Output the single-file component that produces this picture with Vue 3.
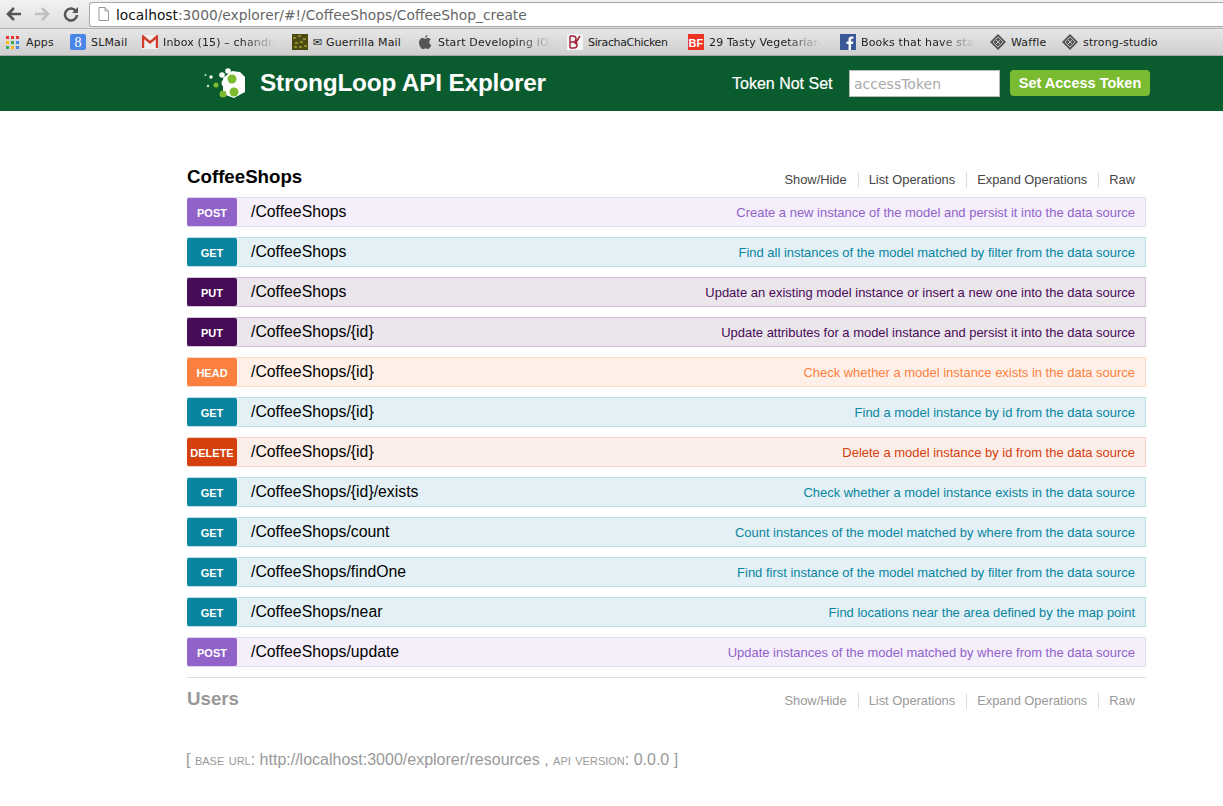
<script setup>
const bookmarks = [
  { id: 'apps', label: 'Apps', w: 65 },
  { id: 'g', label: 'SLMail', w: 72 },
  { id: 'm', label: 'Inbox (15) – chandrika', w: 150, fade: true, tw: 113 },
  { id: 'guerrilla', label: '✉ Guerrilla Mail', w: 125 },
  { id: 'apple', label: 'Start Developing iOS Apps', w: 150, fade: true, tw: 114 },
  { id: 'sir', label: 'SirachaChicken', w: 121, ls: -0.35 },
  { id: 'bf', label: '29 Tasty Vegetarian Recipes', w: 152, fade: true, tw: 112 },
  { id: 'f', label: 'Books that have stayed', w: 150, fade: true, tw: 114 },
  { id: 'w', label: 'Waffle', w: 72 },
  { id: 'w', label: 'strong-studio', w: 100 },
]
const rows = [
  ['post', 'POST', '/CoffeeShops', 'Create a new instance of the model and persist it into the data source'],
  ['get', 'GET', '/CoffeeShops', 'Find all instances of the model matched by filter from the data source'],
  ['put', 'PUT', '/CoffeeShops', 'Update an existing model instance or insert a new one into the data source'],
  ['put', 'PUT', '/CoffeeShops/{id}', 'Update attributes for a model instance and persist it into the data source'],
  ['head', 'HEAD', '/CoffeeShops/{id}', 'Check whether a model instance exists in the data source'],
  ['get', 'GET', '/CoffeeShops/{id}', 'Find a model instance by id from the data source'],
  ['delete', 'DELETE', '/CoffeeShops/{id}', 'Delete a model instance by id from the data source'],
  ['get', 'GET', '/CoffeeShops/{id}/exists', 'Check whether a model instance exists in the data source'],
  ['get', 'GET', '/CoffeeShops/count', 'Count instances of the model matched by where from the data source'],
  ['get', 'GET', '/CoffeeShops/findOne', 'Find first instance of the model matched by filter from the data source'],
  ['get', 'GET', '/CoffeeShops/near', 'Find locations near the area defined by the map point'],
  ['post', 'POST', '/CoffeeShops/update', 'Update instances of the model matched by where from the data source'],
]
const links = ['Show/Hide', 'List Operations', 'Expand Operations', 'Raw']
const appDots = ['#e33', '#e33', '#e33', '#fb0', '#3a5', '#48e', '#3a5', '#fb0', '#48e']
function textStyle(b) {
  const s = {}
  if (b.tw) s.width = b.tw + 'px'
  if (b.ls) s.letterSpacing = b.ls + 'px'
  return s
}
</script>

<template>
  <div class="page">
    <div class="toolbar">
      <svg class="nav" width="16" height="16" viewBox="0 0 16 16"><path d="M8 2 2 8l6 6M2.500 8H15" fill="none" stroke="#555" stroke-width="2.600"/></svg>
      <svg class="nav fwd" width="16" height="16" viewBox="0 0 16 16"><path d="M8 2l6 6-6 6M13.500 8H1" fill="none" stroke="#c0c0c0" stroke-width="2.600"/></svg>
      <svg class="nav reload" width="16" height="16" viewBox="0 0 16 16"><path d="M13 5.200A6 6 0 1 0 14 9" fill="none" stroke="#555" stroke-width="2.500"/><path d="M15 1v6H9z" fill="#555"/></svg>
      <div class="omni">
        <svg width="11" height="14" viewBox="0 0 11 14"><path d="M1 .5h6l3.500 3.500v9.500H1zM7 .5V4h3.500" fill="#fff" stroke="#999"/></svg>
        <span class="url"><b>localhost</b>:3000/explorer/#!/CoffeeShops/CoffeeShop_create</span>
      </div>
    </div>

    <div class="bookmarks">
      <div v-for="b in bookmarks" :key="b.label" class="bm" :style="{ width: b.w + 'px' }">
        <span class="bm-icon">
          <span v-if="b.id === 'apps'" class="apps"><i v-for="(c, i) in appDots" :key="i" :style="{ background: c }"></i></span>
          <svg v-else-if="b.id === 'g'" width="16" height="16" viewBox="0 0 16 16"><rect width="16" height="16" rx="2" fill="#4a86e8"/><text x="8" y="13" text-anchor="middle" font-size="14" font-family="Liberation Serif" fill="#fff">8</text></svg>
          <svg v-else-if="b.id === 'm'" width="16" height="14" viewBox="0 0 16 14"><rect width="16" height="14" fill="#eee"/><path d="M1 13V1.500l7 6 7-6V13" fill="none" stroke="#d33b2c" stroke-width="2.400"/></svg>
          <svg v-else-if="b.id === 'guerrilla'" width="16" height="16" viewBox="0 0 16 16"><rect width="16" height="16" fill="#4d4a12"/><path d="M1 3h3v2H1zM6 1h3v2H6zM11 4h3v2h-3zM3 8h3v2H3zM8 7h3v2H8zM12 11h3v2h-3zM2 12h3v2H2zM7 12h3v2H7z" fill="#8b8a2a"/></svg>
          <svg v-else-if="b.id === 'apple'" width="14" height="16" viewBox="0 0 14 16"><path d="M9.500 1C9.500 2.600 8.300 3.800 7 3.800 7 2.300 8.200 1.200 9.500 1zM7 4.800c.8 0 1.700-.8 3-.8 1.100 0 2.200.6 2.800 1.500-2.300 1.400-1.900 4.600.6 5.600-.7 1.800-2 3.900-3.300 3.900-.9 0-1.400-.6-2.500-.6s-1.700.6-2.600.6C3.300 15 1 11.800 1 8.700 1 5.800 2.800 4 4.700 4c1 0 1.700.8 2.300.8z" fill="#555"/></svg>
          <svg v-else-if="b.id === 'sir'" width="16" height="16" viewBox="0 0 16 16"><rect width="16" height="16" fill="#f4f4f4"/><path d="M3 2v12M3 2h3q3 0 3 3t-3 3H3M3 8h4q3 0 3 3t-3 3H3M13 2 8 10" fill="none" stroke="#a2263c" stroke-width="1.500"/></svg>
          <svg v-else-if="b.id === 'bf'" width="16" height="16" viewBox="0 0 16 16"><rect width="16" height="16" fill="#ee3322"/><text x="8" y="12.500" text-anchor="middle" font-size="11" font-weight="700" font-family="Liberation Sans" fill="#fff">BF</text></svg>
          <svg v-else-if="b.id === 'f'" width="16" height="16" viewBox="0 0 16 16"><rect width="16" height="16" fill="#3b5998"/><path d="M11 16V10h2l.3-2.500H11V6c0-.8.300-1.200 1.200-1.200h1.200V2.500C13 2.400 12.300 2.400 11.600 2.400 9.700 2.400 8.500 3.500 8.500 5.600v1.900h-2V10h2v6z" fill="#fff"/></svg>
          <svg v-else width="16" height="16" viewBox="0 0 16 16"><path d="M8 0l8 8-8 8-8-8z" fill="#555"/><path d="M8 3 13 8 8 13 3 8zM5.500 5.500l5 5M10.500 5.500l-5 5" fill="none" stroke="#ccc" stroke-width=".9"/></svg>
        </span>
        <span class="bm-text" :class="{ fade: b.fade }" :style="textStyle(b)">{{ b.label }}</span>
      </div>
    </div>

    <header class="top">
      <div class="brand">
        <svg class="logo" width="42" height="32" viewBox="0 0 42 32">
          <path d="M28 3l8 1 5 5v15l-11 6-11-4V10z" fill="#fff"/>
          <circle cx="28" cy="11" r="4.500" fill="#7dbb2f"/>
          <circle cx="30" cy="24" r="4.500" fill="#7dbb2f"/>
          <circle cx="19" cy="26" r="3.500" fill="#7dbb2f"/>
          <circle cx="18" cy="7" r="2.800" fill="#fff"/>
          <circle cx="24" cy="3" r="2.800" fill="#fff"/>
          <circle cx="21" cy="15" r="3.500" fill="#fff"/>
          <circle cx="12" cy="17" r="2.500" fill="#7dbb2f"/>
          <circle cx="7" cy="9" r="1.700" fill="#fff"/>
          <circle cx="1.500" cy="7" r="1" fill="#cfe3c0"/>
          <circle cx="4" cy="18" r="1.200" fill="#cfe3c0"/>
        </svg>
        <span class="title">StrongLoop API Explorer</span>
      </div>
      <div class="token">
        <span class="token-label">Token Not Set</span>
        <input class="token-input" placeholder="accessToken" />
        <button class="token-btn">Set Access Token</button>
      </div>
    </header>

    <main class="content">
      <section class="resource">
        <div class="res-head">
          <h2>CoffeeShops</h2>
          <ul class="links"><li v-for="l in links" :key="l">{{ l }}</li></ul>
        </div>
        <div class="ops">
          <div v-for="r in rows" :key="r[0] + r[2] + r[3]" class="op" :class="r[0]">
            <span class="method">{{ r[1] }}</span>
            <span class="path">{{ r[2] }}</span>
            <span class="desc">{{ r[3] }}</span>
          </div>
        </div>
      </section>
      <section class="resource users">
        <div class="res-head">
          <h2>Users</h2>
          <ul class="links"><li v-for="l in links" :key="l">{{ l }}</li></ul>
        </div>
      </section>
      <p class="base">[ <span class="sc">base url</span>: http://localhost:3000/explorer/resources , <span class="sc">api version</span>: 0.0.0 ]</p>
    </main>
  </div>
</template>

<style>
html, body { margin: 0; background: #fff; }
</style>

<style scoped>
.page { width: 1223px; height: 806px; overflow: hidden; font-family: "Liberation Sans", Arial, sans-serif; }
.toolbar { height: 28px; box-sizing: border-box; display: flex; align-items: center; background: linear-gradient(#f2f2f2, #dedede); padding: 1px 0 1px 6px; }
.nav { flex: none; margin-right: 12px; }
.fwd { margin-right: 13px; }
.reload { margin-right: 10px; }
.omni { flex: 1; height: 25px; box-sizing: border-box; background: #fff; border: 1px solid #a9a9a9; border-right: 0; border-radius: 3px 0 0 3px; display: flex; align-items: center; padding-left: 8px; gap: 7px; }
.url { font-family: "DejaVu Sans", sans-serif; font-size: 13.800px; color: #666; white-space: nowrap; padding-top: 1px; }
.url b { font-weight: 400; color: #111; }
.bookmarks { height: 28px; box-sizing: border-box; display: flex; align-items: center; padding-left: 5px; background: linear-gradient(#e6e6e6, #cfcfcf); border-top: 1px solid #b4b4b4; border-bottom: 1px solid #a8a8a8; }
.bm { flex: none; display: flex; align-items: center; gap: 5px; font-family: "DejaVu Sans", sans-serif; font-size: 11px; letter-spacing: .15px; color: #222; white-space: nowrap; }
.bm-icon { flex: none; width: 16px; height: 16px; display: flex; align-items: center; justify-content: center; }
.bm-text { overflow: hidden; }
.fade { -webkit-mask-image: linear-gradient(90deg, #000 70%, transparent); mask-image: linear-gradient(90deg, #000 70%, transparent); }
.apps { display: grid; grid-template-columns: repeat(3, 3px); gap: 2px; margin-left: -2px; }
.apps i { display: block; width: 3px; height: 3px; }
.top { height: 55px; background: #0a5c2e; display: flex; align-items: center; padding-left: 204px; }
.brand { display: flex; align-items: center; width: 528px; }
.logo { flex: none; margin-right: 14px; }
.title { font-size: 24.400px; font-weight: 700; color: #fff; white-space: nowrap; letter-spacing: -0.2px; margin-top: -2px; }
.token { display: flex; align-items: center; }
.token-label { font-size: 16px; color: #fff; white-space: nowrap; width: 117px; -webkit-text-stroke: .2px #fff; }
.token-input { width: 151px; height: 27px; box-sizing: border-box; border: 1px solid #bbb; background: #fff; padding: 0 4px; font-family: "DejaVu Sans", sans-serif; font-size: 14px; outline: 0; margin-right: 10px; }
.token-input::placeholder { color: #aaa; opacity: 1; }
.token-btn { width: 140px; height: 26px; margin-top: -1px; border: 0; border-radius: 4px; background: #7bbb31; color: #fff; font-family: "Liberation Sans", sans-serif; font-size: 14.500px; font-weight: 700; padding: 0 0 1px; }
.content { width: 959px; margin-left: 187px; padding-top: 55px; }
.res-head { display: flex; align-items: center; justify-content: space-between; height: 22px; margin-bottom: 9px; }
h2 { margin: 0; font-size: 18.700px; font-weight: 700; color: #000; }
.links { list-style: none; margin: 0; padding: 6px 0 0; display: flex; font-size: 12.870px; color: #444; }
.links li { padding: 0 11px 0 10px; border-right: 1px solid #ddd; line-height: 16px; }
.links li:last-child { border-right: 0; }
.ops { display: flex; flex-direction: column; gap: 10px; }
.op { height: 30px; box-sizing: border-box; border: 1px solid; display: flex; align-items: center; padding-right: 10px; }
.method { width: 50px; height: 28px; margin-left: -1px; flex: none; box-sizing: border-box; padding-top: 2px; border-radius: 2px; color: #fff; font-size: 11px; font-weight: 700; display: flex; align-items: center; justify-content: center; }
.path { font-size: 15.800px; color: #000; margin-left: 14px; }
.desc { margin-left: auto; font-size: 12.980px; }
.post { background: #f5eefb; border-color: #e3d8f0; }
.post .method { background: #9163c9; }
.post .desc { color: #9163c9; }
.get { background: #e3f1f6; border-color: #bcdde8; }
.get .method { background: #0a84a0; }
.get .desc { color: #0a84a0; }
.put { background: #ebe5ec; border-color: #d2c0d4; }
.put .method { background: #470b57; }
.put .desc { color: #470b57; }
.head { background: #fef0e8; border-color: #fbdcc8; }
.head .method { background: #fb8040; }
.head .desc { color: #fb8040; }
.delete { background: #fbede7; border-color: #f3d3c5; }
.delete .method { background: #d5400f; }
.delete .desc { color: #d5400f; }
.users { margin-top: 10px; border-top: 1px solid #ddd; padding-top: 10px; }
.users h2 { color: #999; }
.users .links { color: #999; padding-top: 4px; }
.base { margin: 41px 0 0 -1px; color: #999; font-size: 16px; white-space: nowrap; }
.sc { font-variant: small-caps; }
</style>
